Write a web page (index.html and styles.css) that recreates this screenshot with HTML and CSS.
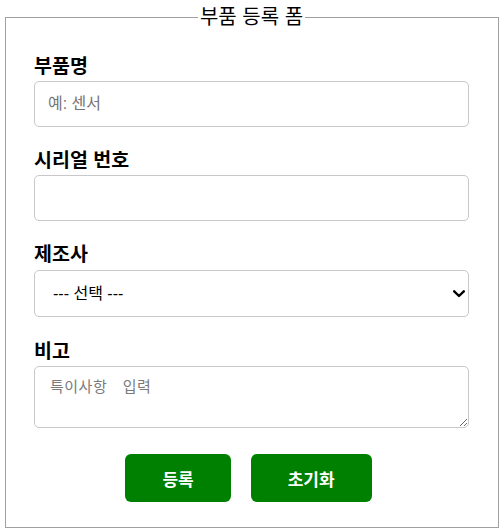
FILE: index.html
```html
<!DOCTYPE html>
<html lang="ko">
<head>
<meta charset="utf-8">
<title>부품 등록 폼</title>
<link rel="stylesheet" href="styles.css">
</head>
<body>
<form class="part-form">
  <fieldset class="frame">
    <legend class="frame-title">부품 등록 폼</legend>
    <div class="field">
      <label class="field-label" for="name">부품명</label>
      <input class="control" id="name" type="text" placeholder="예: 센서">
    </div>
    <div class="field">
      <label class="field-label" for="serial">시리얼 번호</label>
      <input class="control" id="serial" type="text">
    </div>
    <div class="field">
      <label class="field-label" for="maker">제조사</label>
      <div class="select-wrap">
        <select class="control select" id="maker">
          <option>--- 선택 ---</option>
        </select>
        <svg class="chevron" width="12" height="8" viewBox="0 0 12 8" aria-hidden="true">
          <path d="M1.2 1.3 L6 6 L10.8 1.3" fill="none" stroke="#000" stroke-width="2.4" stroke-linecap="round" stroke-linejoin="round"/>
        </svg>
      </div>
    </div>
    <div class="field">
      <label class="field-label" for="note">비고</label>
      <textarea class="control note" id="note" placeholder="특이사항 입력"></textarea>
    </div>
    <div class="actions">
      <button class="btn" type="submit">등록</button>
      <button class="btn" type="reset">초기화</button>
    </div>
  </fieldset>
</form>
</body>
</html>
```

FILE: styles.css
```css
html, body {
  margin: 0;
  padding: 0;
  background: #fff;
}
body {
  font-family: "Liberation Sans", "Noto Sans CJK KR", sans-serif;
  color: #000;
}
.part-form {
  margin: 0;
  padding: 6px 5px 0;
}
.frame {
  margin: 0;
  border: 1px solid #a0a0a0;
  padding: 27px 29px 25px 28px;
  min-width: 0;
}
.frame-title {
  margin: 0 auto;
  padding: 0 2px;
  font-size: 20px;
  line-height: 22px;
}
.field {
  display: flex;
  flex-direction: column;
  gap: 4px;
  margin-bottom: 22px;
}
.field-label {
  font-size: 19.5px;
  font-weight: bold;
  line-height: 22px;
}
.control {
  box-sizing: border-box;
  width: 100%;
  height: 46px;
  margin: 0;
  padding: 12px 13px;
  border: 1px solid #c8c8c8;
  border-radius: 5px;
  font-family: "Liberation Sans", "Noto Sans CJK KR", sans-serif;
  font-size: 16px;
  background: #fff;
  color: #000;
}
.control::placeholder {
  color: #757575;
}
.select-wrap {
  position: relative;
  margin: 1px 0 1px;
}
.select {
  display: block;
  height: 47px;
  padding: 0 30px 0 18px;
  appearance: none;
  -webkit-appearance: none;
}
.chevron {
  position: absolute;
  right: 4px;
  top: 20px;
  pointer-events: none;
}
.note {
  height: 62px;
  padding: 8px 15px;
  font-family: "Liberation Mono", "Noto Sans CJK KR", monospace;
  font-size: 15px;
  letter-spacing: 0.5px;
  word-spacing: 6px;
  resize: vertical;
}
.note::placeholder {
  color: #7a7a7a;
  letter-spacing: 0.5px;
  word-spacing: 6px;
}
.actions {
  display: flex;
  justify-content: center;
  gap: 20px;
  padding: 4px 6px 0 0;
}
.btn {
  height: 48px;
  padding: 0 37px;
  border: none;
  border-radius: 6px;
  background: #008000;
  color: #fff;
  font-family: "Liberation Sans", "Noto Sans CJK KR", sans-serif;
  font-size: 17px;
  font-weight: bold;
  cursor: pointer;
}
```
